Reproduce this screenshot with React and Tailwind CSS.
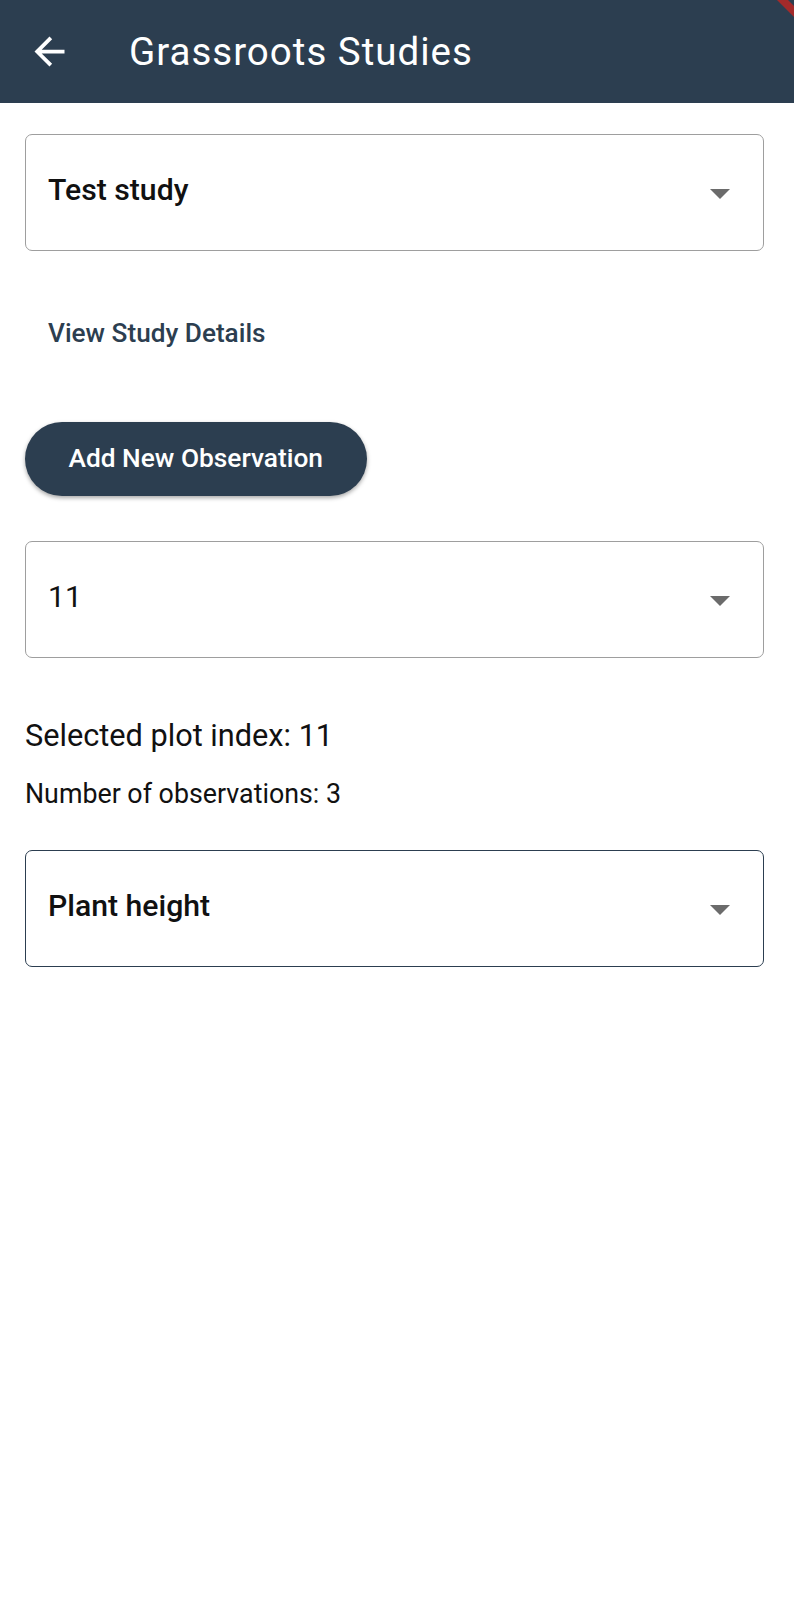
import React from 'react';

const font = { fontFamily: 'Roboto, "Noto Sans", sans-serif' };

function BackArrow() {
  return (
    <svg width="45" height="45" viewBox="0 0 24 24" fill="white" className="ml-[27px] shrink-0">
      <path d="M20 11H7.83l5.59-5.59L12 4l-8 8 8 8 1.41-1.41L7.83 13H20v-2z" />
    </svg>
  );
}

function Caret() {
  return (
    <svg width="20" height="10" viewBox="0 0 20 10" className="shrink-0 mt-[2px]">
      <polygon points="0,0 20,0 10,10" fill="#6b6b6b" />
    </svg>
  );
}

function Dropdown({ value, weight = 'font-medium', border = 'border-[#9e9e9e]' }) {
  return (
    <div className={`h-[117px] rounded-[7px] border-[1.5px] ${border} flex items-center pl-[22px] pr-[33px]`}>
      <span className={`flex-1 text-[30.2px] ${weight} text-[#111111] mb-[6px]`}>{value}</span>
      <Caret />
    </div>
  );
}

export default function App() {
  return (
    <div className="relative w-[794px] min-h-[1599px] bg-white" style={font}>
      <header className="h-[103px] bg-[#2c3e50] flex items-center">
        <BackArrow />
        <h1 className="ml-[57px] text-[38.5px] text-white tracking-[1px]">Grassroots Studies</h1>
      </header>

      {/* debug banner corner */}
      <svg className="absolute top-0 right-0" width="20" height="18" viewBox="0 0 20 18">
        <polygon points="3,0 14,0 20,6 20,17" fill="#a32a2a" />
      </svg>

      <main className="pl-[25px] pr-[30px] pt-[31px]">
        <Dropdown value="Test study" />

        <div className="mt-[63px] h-[40px] flex items-center pl-[23px]">
          <span className="text-[26.2px] font-medium text-[#2c3e50]">View Study Details</span>
        </div>

        <button className="mt-[68px] h-[74px] px-[43.5px] rounded-full bg-[#2c3e50] text-white text-[26.3px] font-medium shadow-[0_2px_4px_rgba(0,0,0,0.35)]">
          Add New Observation
        </button>

        <div className="mt-[45px]">
          <Dropdown value="11" weight="font-normal" />
        </div>

        <p className="mt-[58px] h-[40px] flex items-center text-[30.7px] text-[#111111]">Selected plot index: 11</p>
        <p className="mt-[20px] h-[36px] flex items-center text-[26.8px] text-[#111111]">Number of observations: 3</p>

        <div className="mt-[38px]">
          <Dropdown value="Plant height" border="border-[#2c3e50]" />
        </div>
      </main>
    </div>
  );
}
